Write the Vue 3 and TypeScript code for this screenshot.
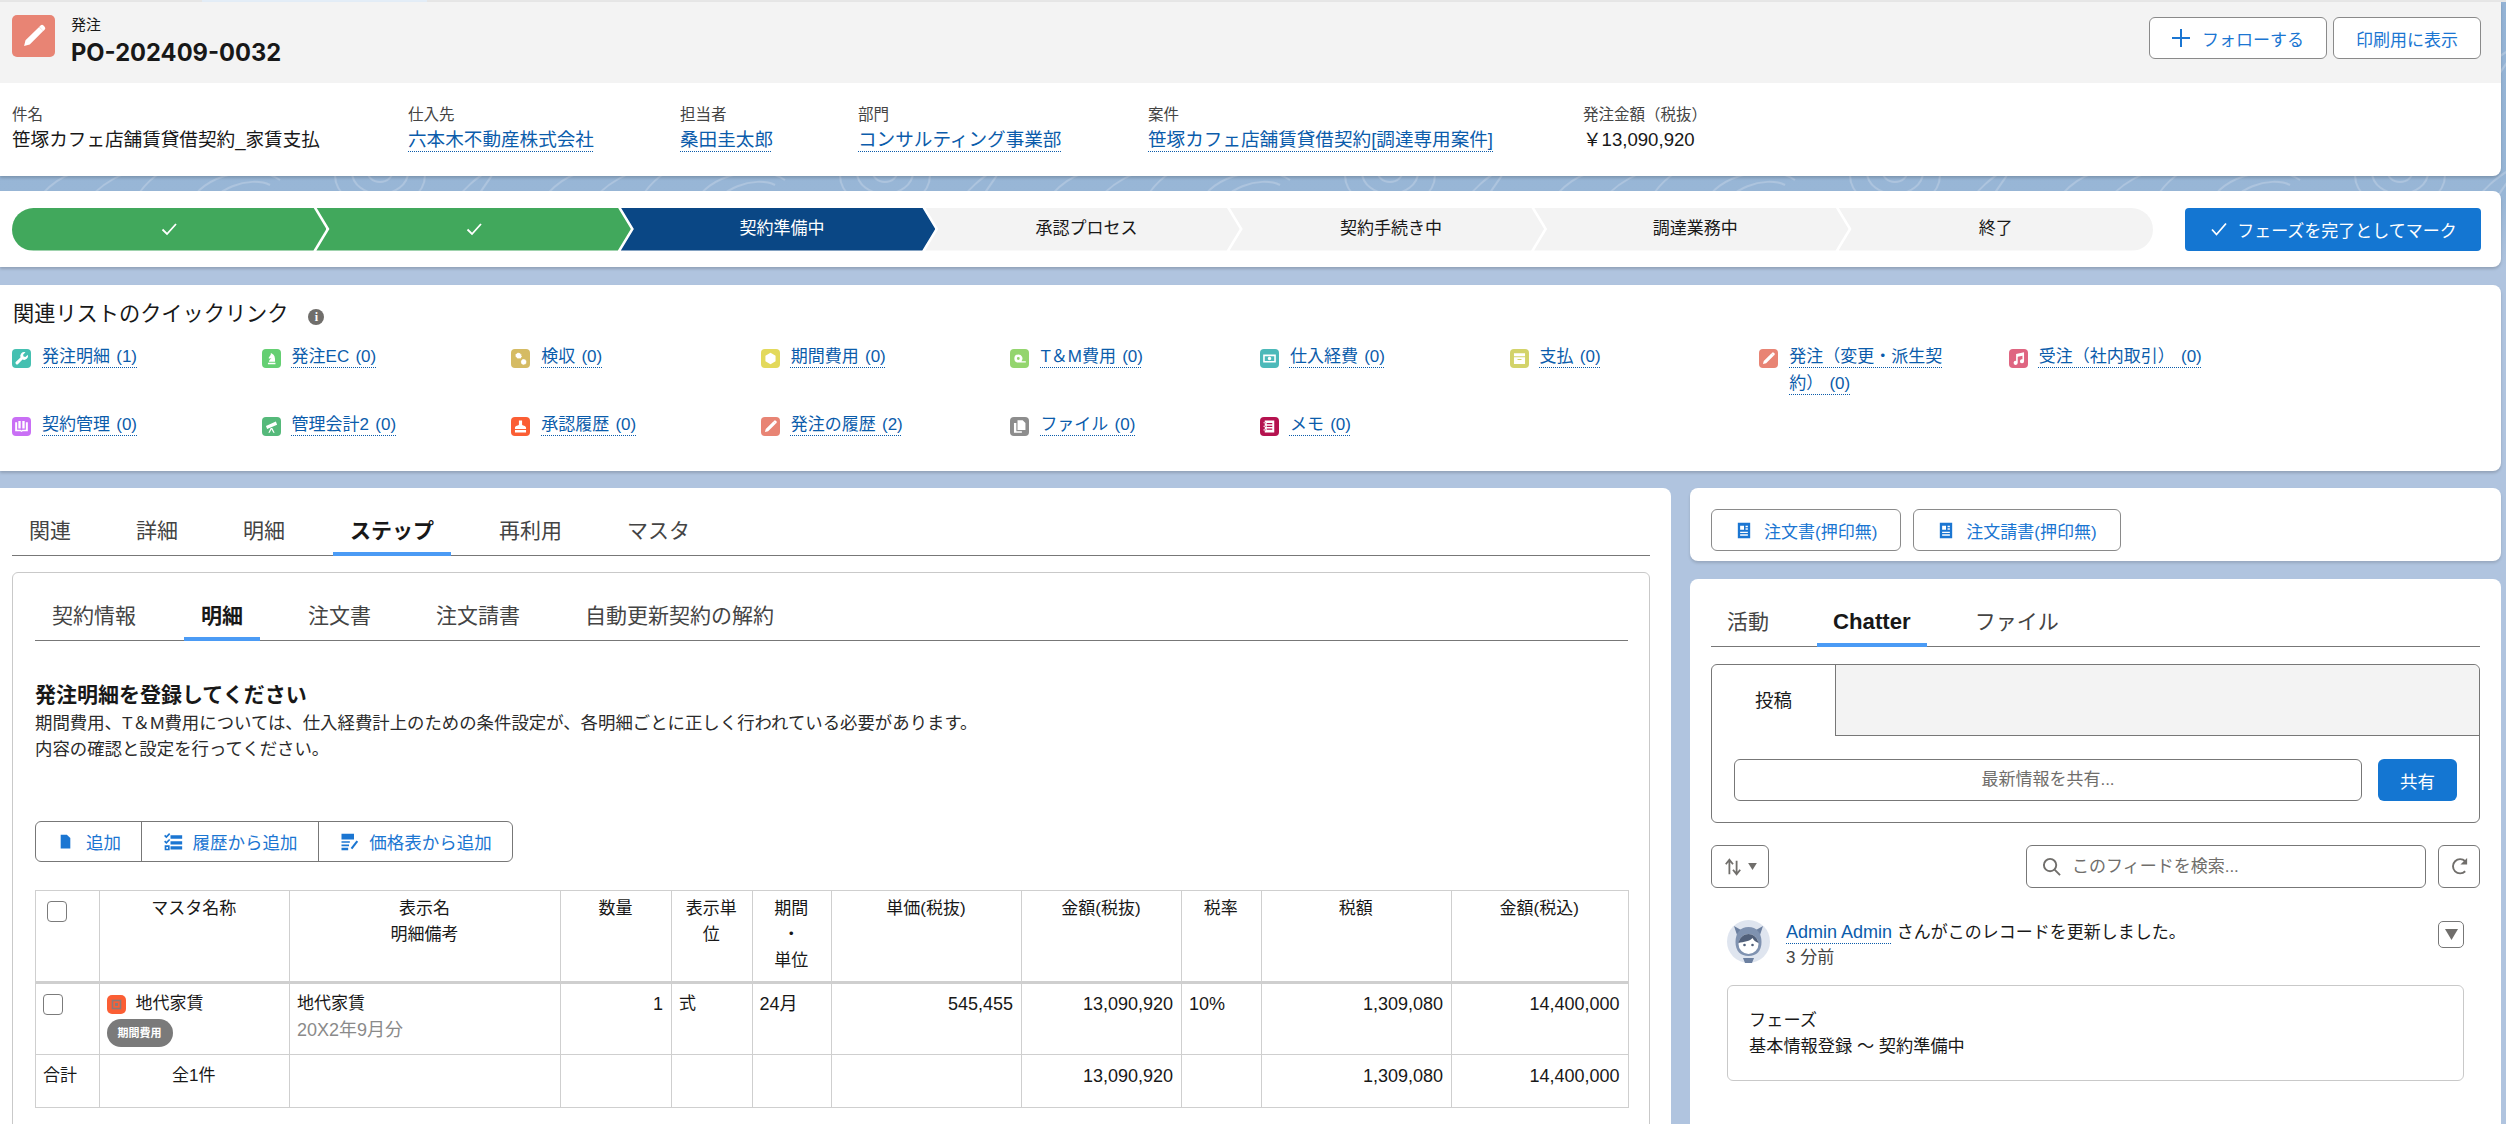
<script setup lang="ts">
interface QuickLink { label: string; color: string; d: string }

const pencil = 'M15.6 5.6l2.9 2.9L9 18l-4 1 1-4zM16.6 4.6a1.5 1.5 0 0 1 2.1 0l.8.8a1.5 1.5 0 0 1 0 2.1l-.9.9-2.9-2.9z'

const quickLinks: QuickLink[] = [
  { label: '発注明細 (1)', color: '#45c0b1', d: 'M20 7.2l-3.1 3-2.3-.6-.6-2.3 3-3.1a5 5 0 0 0-6.3 6.4L5 16.2a1.9 1.9 0 0 0 2.7 2.8l5.6-5.6A5 5 0 0 0 20 7.200z' },
  { label: '発注EC (0)', color: '#64cf72', d: 'M7.500 17.300h9.500v2H7.500zM8.800 16c.2-2 1.800-3 3.200-4.500-1 .6-2 .6-3 .5-.6-.1-.8-.6-.5-1.100l2.500-3.700.2-2.200 1.600 1c2.700.9 4 4.500 3.700 10z' },
  { label: '検収 (0)', color: '#d5bb63', d: 'M9 4.500l1 1 1.500-.4.400 1.400 1.400.4-.4 1.500 1 1-1 1-.4 1.500-1.400-.4-1 1-1-1-1.500.4-.4-1.500-1.400-.4.400-1.500-1-1 1-1zM16 12.500l.8.800 1.100-.3.300 1.100 1.100.3-.3 1.100.8.800-.8.800.3 1.100-1.100.3-.3 1.100-1.100-.3-.8.8-.8-.8-1.100.3-.3-1.100-1.100-.3.3-1.100-.8-.8.8-.8-.3-1.100 1.100-.3.3-1.100 1.100.3z' },
  { label: '期間費用 (0)', color: '#e3d95b', d: 'M12 4.800l6.400 3.600v7.200L12 19.200l-6.400-3.600V8.400z' },
  { label: 'T＆M費用 (0)', color: '#94d56e', d: 'M10.500 7a5 5 0 1 0 0 10h9.500v-1.600h-5.600A5 5 0 0 0 10.500 7zm0 3.200a1.800 1.800 0 1 1 0 3.600 1.800 1.800 0 0 1 0-3.600z' },
  { label: '仕入経費 (0)', color: '#4cb9b9', d: 'M4 7h16v10H4zM6 9v6h12V9zM12 9.800a2.200 2.200 0 1 1 0 4.400 2.200 2.200 0 0 1 0-4.400z' },
  { label: '支払 (0)', color: '#d3d36a', d: 'M5 5.500h14v3.500H5zM5 10.500h14V19H5zM9.500 12.500v1.500h5v-1.500z' },
  { label: '発注（変更・派生契約） (0)', color: '#e88474', d: pencil },
  { label: '受注（社内取引） (0)', color: '#df6581', d: 'M9 6.300L19 4v11.500a2.600 2.600 0 1 1-2-2.500V8.500l-6 1.400V17.500a2.600 2.600 0 1 1-2-2.500z' },
  { label: '契約管理 (0)', color: '#c96ff5', d: 'M4 6.500h2.500v9.500H11l1 1 1-1h4.500V6.500H20V18h-6.500l-1.500 1-1.500-1H4zM8 5h3v9.500H8zM13 5h3v9.500h-3z' },
  { label: '管理会計2 (0)', color: '#55b97a', d: 'M5 11.500l12.500-5.700 1.600 3.900L6.500 15zM11 14l-3 6h1.700l2.300-4.500 2.300 4.500H16l-3-6z' },
  { label: '承認履歴 (0)', color: '#fb5e34', d: 'M10 4.500h4v5c0 1.500 5 1.500 5 4v1.500H5v-1.500c0-2.500 5-2.500 5-4zM5 16.500h14V19.500H5z' },
  { label: '発注の履歴 (2)', color: '#e88474', d: pencil },
  { label: 'ファイル (0)', color: '#8d8d8d', d: 'M9.500 4H16l3.500 3.500V16.500H9.500zM5 7.500h3v10.500h7v2H5z' },
  { label: 'メモ (0)', color: '#b5124f', d: 'M6 4.500h12v15H6zM8.500 7.500v1.500h7V7.500zM8.500 11v1.500h7V11zM8.500 14.500V16h7v-1.500zM4.500 6.500H7v1.500H4.500zM4.500 11H7v1.500H4.500zM4.500 15.500H7V17H4.500z' }
]

const steps = ['', '', '契約準備中', '承認プロセス', '契約手続き中', '調達業務中', '終了']
const details = [
  { label: '件名', value: '笹塚カフェ店舗賃貸借契約_家賃支払', link: false },
  { label: '仕入先', value: '六本木不動産株式会社', link: true },
  { label: '担当者', value: '桑田圭太郎', link: true },
  { label: '部門', value: 'コンサルティング事業部', link: true },
  { label: '案件', value: '笹塚カフェ店舗賃貸借契約[調達専用案件]', link: true },
  { label: '発注金額（税抜）', value: '￥13,090,920', link: false }
]
const mainTabs = ['関連', '詳細', '明細', 'ステップ', '再利用', 'マスタ']
const subTabs = ['契約情報', '明細', '注文書', '注文請書', '自動更新契約の解約']
const feedTabs = ['活動', 'Chatter', 'ファイル']
const colNames = ['c1', 'c2', 'c3', 'c4', 'c5', 'c6', 'c7', 'c8', 'c9', 'c10', 'c11']
const docPath = 'M4 2h16v20H4zM7 6v5h5V6zM14 6v1.800h3V6zM14 9.200V11h3V9.200zM7 13.500v1.800h10v-1.800zM7 17v1.800h10V17z'
</script>

<template>
  <div class="page">
    <svg class="topo" width="2506" height="268" aria-hidden="true">
      <defs>
        <pattern id="topo-lines" width="505" height="120" patternUnits="userSpaceOnUse" y="150">
          <g fill="none" stroke="#adc4de" stroke-width="2">
            <path d="M30 60C50 30 70 20 90 22M80 60c20-30 50-40 60-40M130 60c10-25 30-40 40-40" />
            <path d="M190 60c0-30 60-50 90-30M210 60c0-20 40-35 60-25" />
            <ellipse cx="380" cy="25" rx="45" ry="34" />
            <ellipse cx="380" cy="22" rx="28" ry="22" />
            <ellipse cx="380" cy="20" rx="13" ry="12" />
            <path d="M450 60c10-20 30-35 40-40M470 60c10-20 20-30 25-40" />
          </g>
        </pattern>
      </defs>
      <rect width="2506" height="268" fill="url(#topo-lines)" />
    </svg>

    <div class="topline"><span class="topline-tab"></span></div>

    <section class="highlight">
      <header class="hl-head">
        <div class="hl-icon">
          <svg viewBox="0 0 24 24" width="34" height="34"><path :d="pencil" fill="#fff" /></svg>
        </div>
        <div class="hl-title">
          <div class="hl-object">発注</div>
          <div class="hl-name">PO-202409-0032</div>
        </div>
        <div class="hl-actions">
          <button class="btn btn-follow">
            <svg viewBox="0 0 18 18" width="18" height="18"><path d="M8 0h2v8h8v2h-8v8H8v-8H0V8h8z" fill="#1b76d2" /></svg>
            フォローする
          </button>
          <button class="btn btn-print">印刷用に表示</button>
        </div>
      </header>
      <div class="hl-fields">
        <div v-for="f in details" :key="f.label" class="field">
          <div class="field-label">{{ f.label }}</div>
          <div class="field-value"><span :class="{ link: f.link }">{{ f.value }}</span></div>
        </div>
      </div>
    </section>

    <section class="path-card">
      <div class="path">
        <div v-for="(s, i) in steps" :key="i" class="step" :class="[i < 2 ? 'done' : i === 2 ? 'current' : 'todo']">
          <svg v-if="i < 2" viewBox="0 0 20 20" width="20" height="20"><path d="M3.500 10.500l4.500 4.500 9-10" fill="none" stroke="#fff" stroke-width="1.800" /></svg>
          <span v-else>{{ s }}</span>
        </div>
      </div>
      <button class="btn-mark">
        <svg viewBox="0 0 20 20" width="20" height="20"><path d="M3 10.500l4.500 5L17 4.500" fill="none" stroke="#fff" stroke-width="1.800" /></svg>
        フェーズを完了としてマーク
      </button>
    </section>

    <section class="links-card">
      <h2 class="links-title">
        関連リストのクイックリンク
        <span class="info">i</span>
      </h2>
      <div class="links-grid">
        <div v-for="q in quickLinks" :key="q.label" class="qlink">
          <svg class="qicon" viewBox="0 0 24 24" width="19" height="19">
            <rect width="24" height="24" rx="5" :fill="q.color" />
            <path :d="q.d" fill="#fff" fill-rule="evenodd" />
          </svg>
          <span class="qtext"><span class="link">{{ q.label }}</span></span>
        </div>
      </div>
    </section>

    <div class="columns">
      <main class="left">
        <div class="tabs main-tabs">
          <div v-for="t in mainTabs" :key="t" class="tab" :class="{ active: t === 'ステップ' }">{{ t }}</div>
        </div>
        <div class="inner">
          <div class="tabs sub-tabs">
            <div v-for="t in subTabs" :key="t" class="tab" :class="{ active: t === '明細' }">{{ t }}</div>
          </div>
          <h3 class="inner-title">発注明細を登録してください</h3>
          <p class="inner-desc">期間費用、T＆M費用については、仕入経費計上のための条件設定が、各明細ごとに正しく行われている必要があります。<br />内容の確認と設定を行ってください。</p>

          <div class="group">
            <button class="g-btn g1">
              <svg viewBox="0 0 16 20" width="11" height="15"><path d="M1 0h9l5 5v15H1z" fill="#1b76d2" /></svg>
              追加
            </button>
            <button class="g-btn g2">
              <svg viewBox="0 0 24 24" width="20" height="20"><path d="M2 4l2 2 4-4M2 11l2 2 4-4M3 17h4v4H3zM10 5h12v2H10zM10 12h12v2H10zM10 18h12v2H10z" fill="none" stroke="#1b76d2" stroke-width="2" /></svg>
              履歴から追加
            </button>
            <button class="g-btn g3">
              <svg viewBox="0 0 24 24" width="20" height="20"><path d="M3 2h15v7H3zM3 11h10v2H3zM3 15h9v2H3zM3 19h8v3H3z" fill="#1b76d2" /><path d="M15 20l7-9" stroke="#1b76d2" stroke-width="2.500" /></svg>
              価格表から追加
            </button>
          </div>

          <table class="lines">
            <colgroup><col v-for="c in colNames" :key="c" :class="c" /></colgroup>
            <thead>
              <tr>
                <th><span class="check check-head"></span></th>
                <th>マスタ名称</th>
                <th>表示名<br />明細備考</th>
                <th>数量</th>
                <th>表示単位</th>
                <th>期間<br />・<br />単位</th>
                <th>単価(税抜)</th>
                <th>金額(税抜)</th>
                <th>税率</th>
                <th>税額</th>
                <th>金額(税込)</th>
              </tr>
            </thead>
            <tbody>
              <tr class="row-main">
                <td><span class="check check-row"></span></td>
                <td>
                  <div class="master">
                    <svg viewBox="0 0 19 19" width="19" height="19"><rect width="19" height="19" rx="5" fill="#fb5e34" /><rect x="5.500" y="5.500" width="8" height="8" fill="none" stroke="#8a7b78" stroke-width="1.600" /><rect x="8" y="8" width="3" height="3" fill="#8a7b78" /></svg>
                    地代家賃
                  </div>
                  <span class="badge">期間費用</span>
                </td>
                <td>地代家賃<div class="muted num">20X2年9月分</div></td>
                <td class="right num">1</td>
                <td>式</td>
                <td class="num">24月</td>
                <td class="right num">545,455</td>
                <td class="right num">13,090,920</td>
                <td class="num">10%</td>
                <td class="right num">1,309,080</td>
                <td class="right num">14,400,000</td>
              </tr>
              <tr class="row-total">
                <td>合計</td>
                <td class="center">全1件</td>
                <td></td>
                <td></td>
                <td></td>
                <td></td>
                <td></td>
                <td class="right num">13,090,920</td>
                <td></td>
                <td class="right num">1,309,080</td>
                <td class="right num">14,400,000</td>
              </tr>
            </tbody>
          </table>
        </div>
      </main>

      <aside class="right-col">
        <div class="doc-card">
          <button class="doc-btn">
            <svg viewBox="2 1 20 22" width="16" height="17"><path :d="docPath" fill="#1b76d2" fill-rule="evenodd" /></svg>
            注文書(押印無)
          </button>
          <button class="doc-btn">
            <svg viewBox="2 1 20 22" width="16" height="17"><path :d="docPath" fill="#1b76d2" fill-rule="evenodd" /></svg>
            注文請書(押印無)
          </button>
        </div>
        <div class="chatter">
          <div class="tabs chat-tabs">
            <div v-for="t in feedTabs" :key="t" class="tab" :class="{ active: t === 'Chatter' }">{{ t }}</div>
          </div>
          <div class="publisher">
            <div class="pub-head">
              <div class="pub-tab">投稿</div>
              <div class="pub-rest"></div>
            </div>
            <div class="pub-body">
              <div class="pub-input">最新情報を共有...</div>
              <button class="pub-share">共有</button>
            </div>
          </div>
          <div class="feed-tools">
            <button class="sort-btn">
              <svg viewBox="0 0 20 24" width="18" height="24"><path d="M6 20V5M2 9l4-5 4 5M14 5v15M10 15l4 5 4-5" fill="none" stroke="#706e6b" stroke-width="2" /></svg>
              <svg viewBox="0 0 10 8" width="9" height="7"><path d="M0 0h10L5 8z" fill="#706e6b" /></svg>
            </button>
            <div class="feed-right">
              <div class="search">
                <svg viewBox="0 0 20 20" width="19" height="19"><circle cx="8.500" cy="8.500" r="6.500" fill="none" stroke="#706e6b" stroke-width="2" /><path d="M13 13l6 6" stroke="#706e6b" stroke-width="2" /></svg>
                このフィードを検索...
              </div>
              <button class="refresh">
                <svg viewBox="0 0 20 20" width="19" height="19"><path d="M16 4.500A7.500 7.500 0 1 0 16 15" fill="none" stroke="#706e6b" stroke-width="2" /><path d="M11 8h7V1z" fill="#706e6b" /></svg>
              </button>
            </div>
          </div>
          <div class="feed-item">
            <svg class="avatar" viewBox="0 0 43 43" width="43" height="43">
              <circle cx="21.500" cy="21.500" r="21.500" fill="#dfe5ef" />
              <path d="M7 6l3 9h23l3-9-7 4H14z" fill="#6c80a0" />
              <path d="M21.500 7c-8 0-13 6-13 15s5 14 13 14 13-5 13-14-5-15-13-15z" fill="#7f92b0" />
              <circle cx="21.500" cy="24" r="10" fill="#fff" />
              <path d="M11.500 23c1-6 6-9 10-9s9 3 10 9c-3-1-5-3-6-5-2 3-9 4-14 5z" fill="#51607a" />
              <circle cx="17.500" cy="25" r="1.300" fill="#51607a" /><circle cx="25.500" cy="25" r="1.300" fill="#51607a" />
              <path d="M16 38h11l-2 5h-7z" fill="#6c80a0" />
            </svg>
            <div class="feed-text">
              <div><span class="link num">Admin Admin</span> さんがこのレコードを更新しました。</div>
              <div class="feed-time">3 分前</div>
            </div>
            <button class="feed-menu">
              <svg viewBox="0 0 12 10" width="13" height="11"><path d="M0 0h12L6 10z" fill="#706e6b" /></svg>
            </button>
          </div>
          <div class="feed-box">
            <div>フェーズ</div>
            <div>基本情報登録 〜 契約準備中</div>
          </div>
        </div>
      </aside>
    </div>
  </div>
</template>

<style>
html, body { margin: 0; padding: 0; background: #b0c4df; overflow: hidden; }
</style>

<style scoped>
.page {
  position: relative;
  width: 2506px;
  height: 1124px;
  overflow: hidden;
  display: flex;
  flex-direction: column;
  background: linear-gradient(#94b3d5 0, #98b6d6 195px, #b0c4df 268px);
  font-family: "Liberation Sans", "Noto Sans CJK JP", sans-serif;
  font-size: 17px;
  line-height: 26px;
  color: #181818;
}
.topo { position: absolute; left: 0; top: 0; }
button { font-family: inherit; margin: 0; cursor: pointer; }
.link { color: #0b5cab; text-decoration: underline dotted 1px; text-underline-offset: 5px; text-decoration-skip-ink: none; }

.topline { position: relative; height: 2px; background: #e6e6e6; flex: none; }
.topline-tab { display: block; margin-left: 202px; width: 225px; height: 2px; background: #e3edf7; }

.highlight {
  position: relative;
  flex: none;
  margin-right: 5px;
  height: 174px;
  background: #fff;
  border-radius: 0 0 8px 0;
  box-shadow: 0 2px 3px rgba(0, 0, 0, .18);
}
.hl-head { height: 81px; box-sizing: border-box; background: #f3f3f3; display: flex; align-items: flex-start; padding: 13px 20px 0 12px; }
.hl-icon { width: 43px; height: 42px; background: #e88474; border-radius: 5px; display: flex; align-items: center; justify-content: center; flex: none; }
.hl-title { margin-left: 16px; }
.hl-object { font-size: 15px; line-height: 20px; margin-top: 0; }
.hl-name { font-family: Inter, "Liberation Sans", sans-serif; font-weight: 700; font-size: 23.700px; line-height: 30px; margin-top: 3px; color: #181818; }
.hl-actions { margin-left: auto; display: flex; gap: 6px; margin-top: 2px; }
.btn { height: 42px; box-sizing: border-box; background: #fff; border: 1.500px solid #8a8a8a; border-radius: 6px; color: #1b76d2; font-size: 17px; display: flex; align-items: center; justify-content: center; }
.btn-follow { width: 178px; gap: 12px; }
.btn-print { width: 148px; }

.hl-fields { display: grid; grid-template-columns: 396px 272px 178px 290px 435px auto; padding: 19px 12px 0; }
.field-label { font-size: 15.500px; line-height: 26px; color: #444; }
.field-value { font-size: 18.600px; line-height: 26px; margin-top: -1px; }

.path-card {
  position: relative;
  flex: none;
  margin: 15px 5px 0 0;
  height: 76px;
  box-sizing: border-box;
  background: #fff;
  border-radius: 0 8px 8px 0;
  box-shadow: 0 2px 3px rgba(0, 0, 0, .18);
  display: flex;
  align-items: center;
  padding: 0 20px 0 12px;
}
.path { display: flex; width: 2141px; }
.step {
  flex: 1 1 0;
  height: 43px;
  margin-right: -10px;
  display: flex;
  align-items: center;
  justify-content: center;
  clip-path: polygon(0 0, calc(100% - 13px) 0, 100% 50%, calc(100% - 13px) 100%, 0 100%, 13px 50%);
}
.current span, .todo span { margin-left: 8px; }
.step:last-child { margin-right: 0; clip-path: polygon(0 0, 100% 0, 100% 100%, 0 100%, 13px 50%); border-radius: 0 22px 22px 0; }
.step:last-child span { margin-left: 0; }
.step:first-child { clip-path: polygon(0 0, calc(100% - 13px) 0, 100% 50%, calc(100% - 13px) 100%, 0 100%); border-radius: 22px 0 0 22px; }
.done { background: #41a85c; }
.current { background: #0a4785; color: #fff; }
.todo { background: #f3f3f3; color: #181818; }
.btn-mark {
  margin-left: auto;
  width: 296px;
  height: 43px;
  border: none;
  border-radius: 4px;
  background: #1476d2;
  color: #fff;
  font-size: 17px;
  display: flex;
  align-items: center;
  justify-content: center;
  gap: 8px;
}

.links-card {
  position: relative;
  flex: none;
  margin: 18px 5px 0 0;
  height: 186px;
  box-sizing: border-box;
  background: #fff;
  border-radius: 0 8px 8px 0;
  box-shadow: 0 2px 3px rgba(0, 0, 0, .18);
  padding: 14px 0 0 12px;
}
.links-title { margin: 0 0 0 1px; font-size: 21.200px; line-height: 30px; font-weight: 400; display: flex; align-items: center; gap: 20px; }
.info { width: 16px; height: 16px; border-radius: 50%; background: #706e6b; color: #fff; font: 700 12px/16px "Liberation Serif", serif; text-align: center; margin-top: 5px; }
.links-grid { display: grid; grid-template-columns: repeat(9, 249.600px); grid-auto-rows: 68px; margin-top: 20px; }
.qlink { display: flex; align-items: flex-start; }
.qicon { flex: none; }
.qtext { margin-left: 11px; width: 168px; font-size: 17px; line-height: 26.500px; margin-top: -5px; word-spacing: 1.500px; }

.columns { position: relative; flex: 1; min-height: 0; display: flex; margin-top: 17px; margin-right: 5px; gap: 19px; }
.left { width: 1671px; flex: none; background: #fff; border-radius: 0 8px 0 0; padding: 23px 21px 0 12px; box-sizing: border-box; }
.tabs { display: flex; gap: 31px; border-bottom: 1.500px solid #777; }
.tab { height: 45px; line-height: 40px; padding: 0 17px; font-size: 21px; color: #444; box-sizing: border-box; margin-bottom: -1px; }
.tab.active { font-weight: 700; color: #181818; box-shadow: inset 0 -4px #4b9bf5; }
.inner { margin-top: 16px; height: 700px; box-sizing: border-box; border: 1.500px solid #c9c9c9; border-radius: 6px; padding: 23px 21px 0 22px; }
.inner-title { margin: 39px 0 0; font-size: 21px; line-height: 30px; font-weight: 700; }
.inner-desc { margin: 0; font-size: 17.400px; line-height: 26px; color: #2b2b2b; }

.group { display: flex; margin-top: 59px; width: 478px; height: 41px; box-sizing: border-box; border: 1.500px solid #777; border-radius: 6px; }
.g-btn { background: none; border: none; color: #1b76d2; font-size: 17.500px; display: flex; align-items: center; justify-content: center; gap: 10px; padding: 0; height: 100%; }
.g1 { width: 106px; border-right: 1px solid #777; gap: 15px; justify-content: flex-start; padding-left: 24px; }
.g2 { width: 177px; border-right: 1px solid #777; }
.g3 { flex: 1; }

.lines { margin-top: 28px; border-collapse: collapse; table-layout: fixed; width: 1593px; font-size: 17px; }
.c1 { width: 63.500px; } .c2 { width: 190.500px; } .c3 { width: 271px; } .c4 { width: 111px; }
.c5 { width: 80.500px; } .c6 { width: 79.500px; } .c7 { width: 190px; } .c8 { width: 160px; }
.c9 { width: 79.500px; } .c10 { width: 190.500px; } .c11 { width: 176.500px; }
.lines th, .lines td { border: 1.500px solid #cfcfcf; vertical-align: top; padding: 7px 8px 0 7px; line-height: 26px; box-sizing: border-box; }
.lines th { font-weight: 400; text-align: center; height: 92px; padding-top: 5px; border-bottom: 3px solid #cfcfcf; }
.lines th:first-child { text-align: left; padding-left: 11px; }
.row-main td { height: 72px; }
.row-total td { height: 53px; padding-top: 8px; }
.check { display: block; box-sizing: border-box; width: 20px; height: 21px; border: 1.500px solid #7b7b7b; border-radius: 4px; background: #fff; }
.check-head { margin-top: 5px; }
.check-row { margin-top: 3px; }
.master { display: flex; align-items: center; gap: 10px; }
.badge { display: block; width: 66px; height: 28px; margin-top: 2px; border-radius: 14px; background: #7a7a7a; color: #fff; font-size: 11px; line-height: 28px; font-weight: 700; text-align: center; }
.muted { color: #8a8a8a; }
.right { text-align: right; }
.center { text-align: center; }
.num { font-size: 18px; }

.right-col { flex: 1; min-width: 0; display: flex; flex-direction: column; gap: 18px; }
.doc-card { height: 73px; box-sizing: border-box; background: #fff; border-radius: 8px; box-shadow: 0 2px 3px rgba(0, 0, 0, .15); padding: 21px 21px 0; display: flex; gap: 12px; }
.doc-btn { height: 42px; box-sizing: border-box; background: #fff; border: 1.500px solid #8a8a8a; border-radius: 6px; color: #1b76d2; font-size: 17px; display: flex; align-items: center; gap: 12px; padding: 0 23px 0 24px; }
.chatter { flex: 1; background: #fff; border-radius: 8px 8px 0 0; padding: 23px 21px 0; }
.chat-tabs { gap: 32px; }
.chat-tabs .tab { padding: 0 16px; height: 45px; }
.chat-tabs .tab.active { font-size: 22.200px; }
.publisher { margin-top: 17px; height: 159px; box-sizing: border-box; border: 1.500px solid #777; border-radius: 6px; }
.pub-head { display: flex; height: 71px; }
.pub-tab { width: 123px; text-align: center; line-height: 71px; font-size: 18.500px; }
.pub-rest { flex: 1; background: #f3f3f3; border-left: 1px solid #777; border-bottom: 1.500px solid #777; border-radius: 0 6px 0 0; }
.pub-body { display: flex; gap: 16px; padding: 23px 22px 0; }
.pub-input { flex: 1; height: 42px; box-sizing: border-box; border: 1.500px solid #777; border-radius: 6px; text-align: center; line-height: 39px; color: #706e6b; }
.pub-share { width: 79px; height: 42px; border: none; border-radius: 6px; background: #1476d2; color: #fff; font-size: 17.500px; }
.feed-tools { display: flex; justify-content: space-between; margin-top: 22px; }
.sort-btn { width: 58px; height: 43px; box-sizing: border-box; background: #fff; border: 1.500px solid #777; border-radius: 6px; display: flex; align-items: center; justify-content: center; gap: 6px; padding: 0; }
.feed-right { display: flex; gap: 12px; }
.search { width: 400px; height: 43px; box-sizing: border-box; border: 1.500px solid #777; border-radius: 6px; display: flex; align-items: center; gap: 11px; padding-left: 15px; color: #706e6b; }
.refresh { width: 42px; height: 43px; box-sizing: border-box; background: #fff; border: 1.500px solid #777; border-radius: 6px; display: flex; align-items: center; justify-content: center; padding: 0; }
.feed-item { display: flex; margin: 32px 16px 0; }
.avatar { flex: none; }
.feed-text { margin: -1px 0 0 16px; }
.feed-time { color: #444; margin-top: -1px; }
.feed-menu { margin-left: auto; margin-top: 1px; width: 26px; height: 27px; box-sizing: border-box; background: #fff; border: 1.500px solid #777; border-radius: 5px; display: flex; align-items: center; justify-content: center; padding: 0; }
.feed-box { margin: 14px 16px 0; height: 96px; box-sizing: border-box; border: 1.500px solid #c9c9c9; border-radius: 6px; padding: 21px 21px 0; font-size: 17.200px; }
</style>
